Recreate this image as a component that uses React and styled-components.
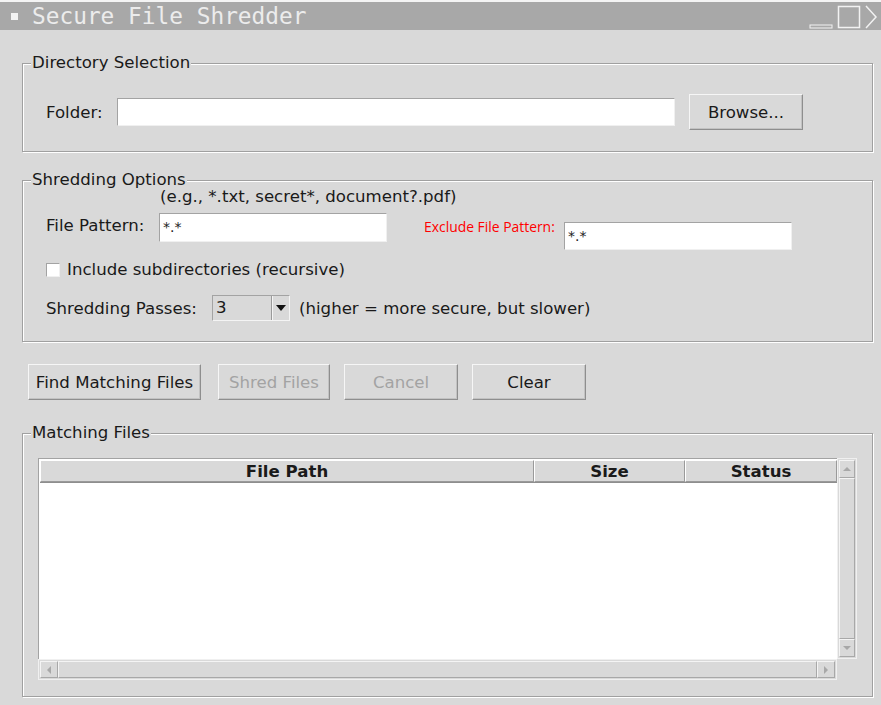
import React from "react";
import styled, { createGlobalStyle } from "styled-components";

const GlobalStyle = createGlobalStyle`
  html, body {
    margin: 0;
    padding: 0;
    background: #ffffff;
  }
  * {
    box-sizing: border-box;
  }
`;

const Window = styled.div`
  width: 881px;
  height: 705px;
  overflow: hidden;
  background: #d9d9d9;
  border-top: 2px solid #f4f4f4;
  font-family: "DejaVu Sans", "Liberation Sans", sans-serif;
  font-size: 16.6px;
  color: #1a1a1a;
`;

const TitleBar = styled.div`
  height: 28px;
  background: #a8a8a8;
  display: flex;
  align-items: center;
  color: #ececec;
  font-family: "DejaVu Sans Mono", "Liberation Mono", monospace;
  font-size: 22.8px;
`;

const Bullet = styled.span`
  width: 7px;
  height: 7px;
  background: #f2f2f2;
  margin: 0 14px 0 11px;
`;

const TitleText = styled.span`
  flex: 1;
  line-height: 28px;
`;

const WinControls = styled.div`
  display: flex;
  align-items: flex-end;
  height: 28px;
  padding-top: 3px;
`;

const Content = styled.div`
  padding: 24px 8px 0 22px;
`;

const Group = styled.fieldset`
  margin: ${(p) => p.$mt || 0}px 0 0 0;
  padding: 0;
  border: 1px solid #a0a0a0;
  box-shadow: inset 1px 1px 0 #ffffff, 1px 1px 0 #ffffff;
  min-width: 0;
`;

const Legend = styled.legend`
  margin-left: 8px;
  padding: 0 1px;
  line-height: 18px;
  background: #d9d9d9;
`;

const GroupBody = styled.div`
  padding: ${(p) => p.$pad};
`;

const Row = styled.div`
  display: flex;
  align-items: ${(p) => p.$align || "center"};
  margin-top: ${(p) => p.$mt || 0}px;
`;

const Label = styled.span`
  width: ${(p) => p.$w}px;
  margin-top: ${(p) => p.$mt || 0}px;
  flex: none;
  white-space: nowrap;
`;

const Entry = styled.div`
  width: ${(p) => p.$w}px;
  height: ${(p) => p.$h || 29}px;
  margin-top: ${(p) => p.$mt || 0}px;
  flex: none;
  background: #ffffff;
  border-top: 1px solid #a3a3a3;
  border-left: 1px solid #a3a3a3;
  border-right: 1px solid #f0f0f0;
  border-bottom: 1px solid #f0f0f0;
  font-size: 14px;
  line-height: 26px;
  padding-left: 3px;
  color: #222;
`;

const Gap = styled.span`
  width: ${(p) => p.$w}px;
  flex: none;
`;

const Button = styled.div`
  width: ${(p) => p.$w}px;
  height: 36px;
  flex: none;
  display: flex;
  align-items: center;
  justify-content: center;
  margin-right: ${(p) => p.$mr || 0}px;
  border-top: 1px solid #f6f6f6;
  border-left: 1px solid #f6f6f6;
  border-right: 1px solid #8e8e8e;
  border-bottom: 1px solid #8e8e8e;
  box-shadow: inset -1px -1px 0 #c2c2c2;
  color: ${(p) => (p.$disabled ? "#a3a3a3" : "#1a1a1a")};
  white-space: nowrap;
`;

const Hint = styled.div`
  padding-left: 114px;
  line-height: 14px;
  margin-top: 1px;
`;

const ExcludeLabel = styled.span`
  font-family: "Open Sans", "Noto Sans", sans-serif;
  font-size: 13.9px;
  color: #ff0000;
  width: 140px;
  flex: none;
  margin-left: 37px;
  margin-top: 4px;
  white-space: nowrap;
`;

const Check = styled.span`
  width: 14px;
  height: 14px;
  flex: none;
  background: #ffffff;
  border-top: 1px solid #a3a3a3;
  border-left: 1px solid #a3a3a3;
  border-right: 1px solid #f0f0f0;
  border-bottom: 1px solid #f0f0f0;
  margin: 0 7px 0 0;
`;

const Combo = styled.div`
  width: 78px;
  height: 26px;
  flex: none;
  display: flex;
  margin-right: 9px;
  border-top: 1px solid #a3a3a3;
  border-left: 1px solid #a3a3a3;
  border-right: 1px solid #f4f4f4;
  border-bottom: 1px solid #f4f4f4;
`;

const ComboValue = styled.span`
  flex: 1;
  padding-left: 3px;
  line-height: 24px;
`;

const ComboArrow = styled.span`
  width: 18px;
  display: flex;
  align-items: center;
  justify-content: center;
  border-left: 1px solid #9a9a9a;
  box-shadow: inset 1px 0 0 #f4f4f4;
`;

const Tree = styled.div`
  display: grid;
  grid-template-columns: 799px 20px;
  grid-template-rows: 201px 21px;
`;

const Table = styled.div`
  display: flex;
  flex-direction: column;
  border-top: 1px solid #a3a3a3;
  border-left: 1px solid #a3a3a3;
  box-shadow: inset 1px 1px 0 #ffffff;
  padding: 1px 0 0 1px;
  background: #ffffff;
`;

const Header = styled.div`
  display: flex;
  height: 23px;
  background: #d9d9d9;
  border-bottom: 1px solid #8e8e8e;
`;

const HeadCell = styled.div`
  width: ${(p) => p.$w}px;
  flex: none;
  display: flex;
  align-items: center;
  justify-content: center;
  font-weight: bold;
  border-top: 1px solid #ffffff;
  border-left: 1px solid #ffffff;
  border-right: 1px solid #9a9a9a;
  border-bottom: 1px solid #9a9a9a;
`;

const Body = styled.div`
  flex: 1;
  background: #ffffff;
`;

const Scroll = styled.div`
  display: flex;
  flex-direction: ${(p) => (p.$vertical ? "column" : "row")};
  background: #d9d9d9;
  border: 1px solid #f0f0f0;
  padding: 1px;
`;

const ScrollPart = styled.div`
  flex: ${(p) => (p.$grow ? 1 : "none")};
  width: ${(p) => (p.$vertical || p.$grow ? "auto" : "18px")};
  height: ${(p) => (p.$vertical && !p.$grow ? "18px" : "auto")};
  display: flex;
  align-items: center;
  justify-content: center;
  border-top: 1px solid #f4f4f4;
  border-left: 1px solid #f4f4f4;
  border-right: 1px solid #a8a8a8;
  border-bottom: 1px solid #a8a8a8;
`;

const Arrow = ({ dir }) => {
  const pts = {
    up: "1,7 5,3 9,7",
    down: "1,3 5,7 9,3",
    left: "7,1 3,5 7,9",
    right: "3,1 7,5 3,9",
  };
  return (
    <svg width="10" height="10" viewBox="0 0 10 10">
      <polygon points={pts[dir]} fill="#a8a8a8" />
    </svg>
  );
};

export default function App() {
  return (
    <>
      <GlobalStyle />
      <Window>
        <TitleBar>
          <Bullet />
          <TitleText>Secure File Shredder</TitleText>
          <WinControls>
            <svg width="72" height="25" viewBox="0 0 72 25">
              <rect x="1" y="20" width="22" height="3" fill="none" stroke="#f2f2f2" strokeWidth="1" />
              <rect x="29.5" y="1.5" width="21" height="21" fill="none" stroke="#f2f2f2" strokeWidth="1.5" />
              <polyline points="57,1 67,12 57,23" fill="none" stroke="#f2f2f2" strokeWidth="1.5" />
            </svg>
          </WinControls>
        </TitleBar>

        <Content>
          <Group>
            <Legend>Directory Selection</Legend>
            <GroupBody $pad="22px 0 21px 23px">
              <Row>
                <Label $w={71}>Folder:</Label>
                <Entry $w={558} $h={28} />
                <Gap $w={14} />
                <Button $w={114}>Browse...</Button>
              </Row>
            </GroupBody>
          </Group>

          <Group $mt={19}>
            <Legend>Shredding Options</Legend>
            <GroupBody $pad="0 0 20px 23px">
              <Hint>(e.g., *.txt, secret*, document?.pdf)</Hint>
              <Row $align="flex-start" $mt={9}>
                <Label $w={113} $mt={3}>File Pattern:</Label>
                <Entry $w={228}>*.*</Entry>
                <ExcludeLabel>Exclude File Pattern:</ExcludeLabel>
                <Entry $w={228} $h={28} $mt={9}>*.*</Entry>
              </Row>
              <Row $mt={10}>
                <Check />
                <span>Include subdirectories (recursive)</span>
              </Row>
              <Row $mt={16}>
                <Label $w={166}>Shredding Passes:</Label>
                <Combo>
                  <ComboValue>3</ComboValue>
                  <ComboArrow>
                    <svg width="10" height="6" viewBox="0 0 10 6">
                      <polygon points="0,0 10,0 5,6" fill="#111" />
                    </svg>
                  </ComboArrow>
                </Combo>
                <span>(higher = more secure, but slower)</span>
              </Row>
            </GroupBody>
          </Group>

          <Row $mt={22} style={{ paddingLeft: 6 }}>
            <Button $w={173} $mr={17}>Find Matching Files</Button>
            <Button $w={112} $mr={14} $disabled>Shred Files</Button>
            <Button $w={114} $mr={14} $disabled>Cancel</Button>
            <Button $w={114}>Clear</Button>
          </Row>

          <Group $mt={24}>
            <Legend>Matching Files</Legend>
            <GroupBody $pad="16px 14px 16px 15px">
              <Tree>
                <Table>
                  <Header>
                    <HeadCell $w={494}>File Path</HeadCell>
                    <HeadCell $w={151}>Size</HeadCell>
                    <HeadCell $w={152}>Status</HeadCell>
                  </Header>
                  <Body />
                </Table>
                <Scroll $vertical>
                  <ScrollPart $vertical><Arrow dir="up" /></ScrollPart>
                  <ScrollPart $vertical $grow />
                  <ScrollPart $vertical><Arrow dir="down" /></ScrollPart>
                </Scroll>
                <Scroll>
                  <ScrollPart><Arrow dir="left" /></ScrollPart>
                  <ScrollPart $grow />
                  <ScrollPart><Arrow dir="right" /></ScrollPart>
                </Scroll>
              </Tree>
            </GroupBody>
          </Group>
        </Content>
      </Window>
    </>
  );
}
